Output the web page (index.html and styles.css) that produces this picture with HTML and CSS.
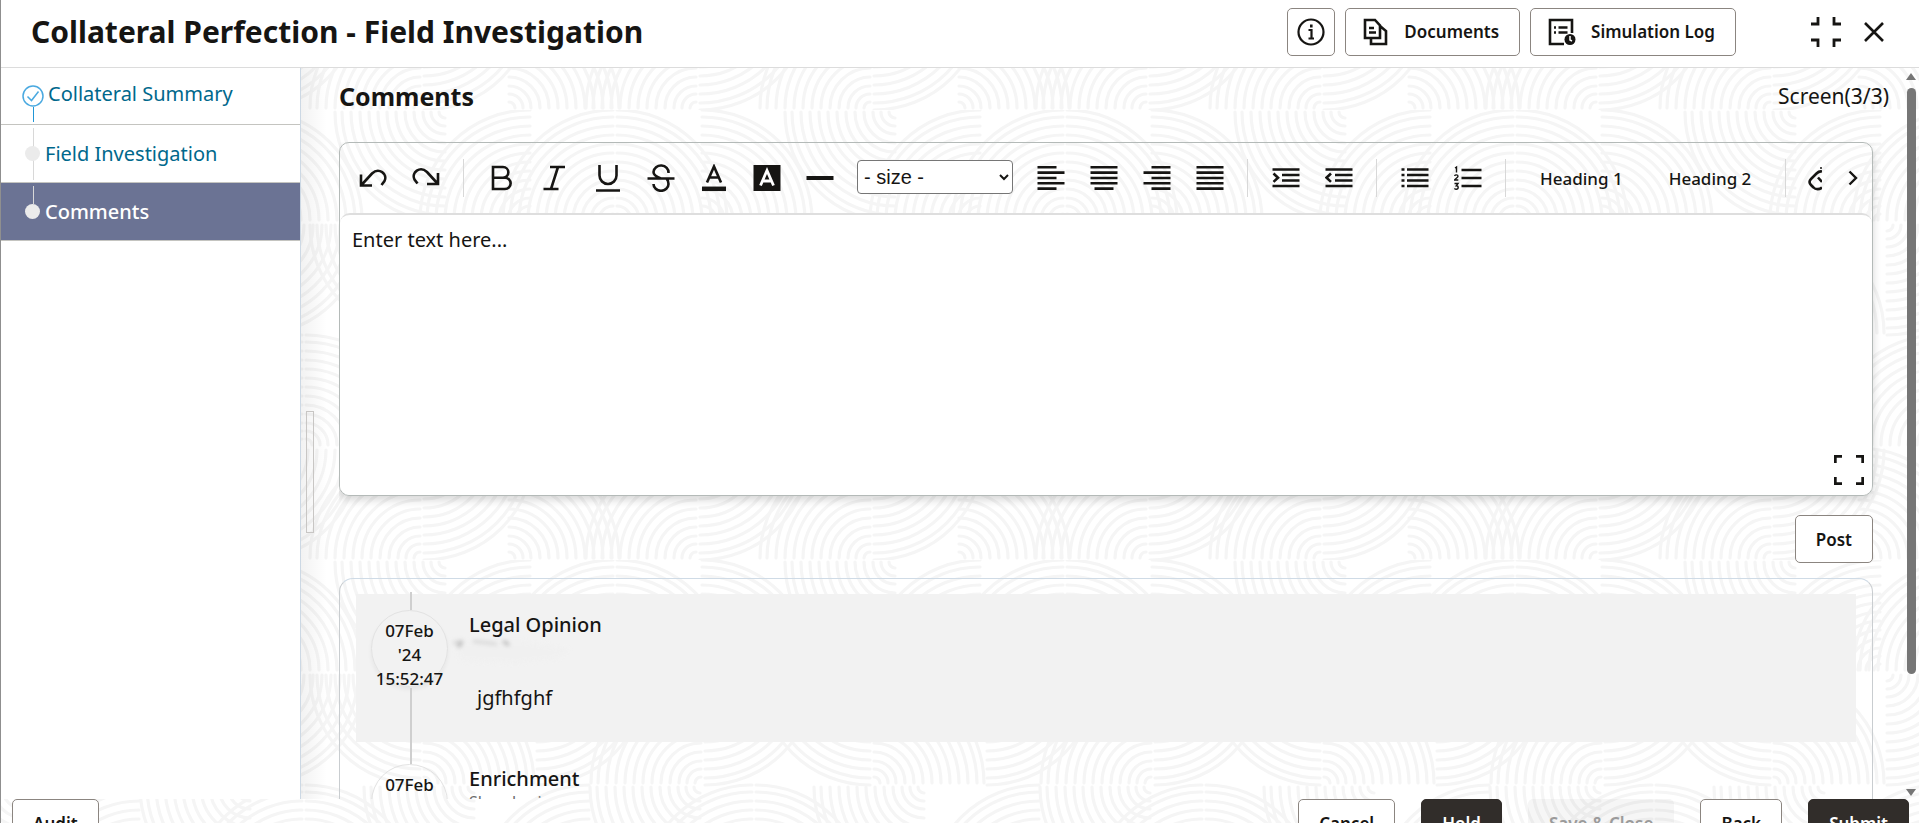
FILE: index.html
```html
<!DOCTYPE html>
<html lang="en">
<head>
<meta charset="utf-8">
<title>Collateral Perfection - Field Investigation</title>
<link rel="stylesheet" href="styles.css">
</head>
<body>
<div class="app">
  <header class="header">
    <h1 class="header-title">Collateral Perfection - Field Investigation</h1>
    <div class="header-actions">
      <button class="btn btn-icon" type="button" aria-label="Information">
        <svg width="28" height="28" viewBox="0 0 28 28" fill="none" stroke="currentColor" stroke-width="2.200"><circle cx="14" cy="14" r="12.500"/><path d="M11.500 12h3v8.500M11.500 20.500h5.500"/><path d="M14.300 6.500v3" stroke-width="2.600"/></svg>
      </button>
      <button class="btn btn-wide" type="button">
        <svg width="26" height="28" viewBox="0 0 26 28" fill="none" stroke="currentColor" stroke-width="2.600"><path d="M2 2h10l5 5.500V20H2zM6 10h5M6 14.500h7M17 8l6 5v13H8v-6"/></svg>
        Documents
      </button>
      <button class="btn btn-wide" type="button">
        <svg width="28" height="28" viewBox="0 0 28 28" fill="none" stroke="currentColor" stroke-width="2.600"><path d="M16 26H2V2h22v13M6 9.500h2M10.500 9.500h9M6 14.500h2M10.500 14.500h9"/><circle cx="22" cy="21.500" r="5.500" fill="currentColor" stroke="none"/><path d="M22 18v4l2 1" stroke="#fff" stroke-width="1.500"/></svg>
        Simulation Log
      </button>
    </div>
    <div class="window-actions">
      <button class="plain" type="button" aria-label="Exit full screen">
        <svg width="30" height="30" viewBox="0 0 30 30" fill="none" stroke="currentColor" stroke-width="2.800"><path d="M7 0v7H0M23 0v7h7M0 23h7v7M30 23h-7v7"/></svg>
      </button>
      <button class="plain" type="button" aria-label="Close">
        <svg width="20" height="20" viewBox="0 0 20 20" fill="none" stroke="currentColor" stroke-width="2.600"><path d="M1 1l18 18M19 1L1 19"/></svg>
      </button>
    </div>
  </header>

  <div class="body">
    <nav class="steps" aria-label="Steps">
      <a class="step step-done" href="#summary">
        <span class="step-mark"><svg width="22" height="22" viewBox="0 0 22 22" fill="none" stroke="#4aa9e0" stroke-width="1.500"><circle cx="11" cy="11" r="10"/><path d="M5.500 11.500l4 4 7-9"/></svg></span>
        Collateral Summary
      </a>
      <a class="step step-middle" href="#field"><span class="step-mark"><i class="dot"></i></span>Field Investigation</a>
      <a class="step step-current" href="#comments" aria-current="step"><span class="step-mark"><i class="dot"></i></span>Comments</a>
    </nav>
    <div class="splitter"><span class="splitter-handle"></span></div>

    <main class="content">
      <div class="content-head">
        <h2 class="content-title">Comments</h2>
        <span class="content-count">Screen(3/3)</span>
      </div>

      <section class="editor">
        <div class="toolbar">
          <button class="tool" type="button" aria-label="Undo"><svg width="28" height="28" viewBox="0 0 28 28"><path d="M2 10.500v11h11M2 21.500L13 9.500C20 3 29 10 25.500 17l-3 4"/></svg></button>
          <button class="tool" type="button" aria-label="Redo"><svg width="28" height="28" viewBox="0 0 28 28"><path d="M26 9v11H15M26 20L15 8C8 1.500-1 8.500 2.500 15.500l3 4"/></svg></button>
          <span class="sep"></span>
          <button class="tool" type="button" aria-label="Bold"><svg width="28" height="28" viewBox="0 0 28 28"><path d="M5 3h10a5.200 5.200 0 0 1 0 10.700H5zM5 13.700h12a5.600 5.600 0 0 1 0 11.300H5z"/></svg></button>
          <button class="tool" type="button" aria-label="Italic"><svg width="28" height="28" viewBox="0 0 28 28"><path d="M9 3h15M2.500 25h15M17 3L10 25"/></svg></button>
          <button class="tool" type="button" aria-label="Underline"><svg width="28" height="28" viewBox="0 0 28 28"><path d="M5.500 1v10.500a8.500 8.500 0 0 0 17 0V1M2 26.500h24"/></svg></button>
          <button class="tool" type="button" aria-label="Strikethrough"><svg width="28" height="28" viewBox="0 0 28 28"><path d="M.500 14.500h27M21.500 9a7.500 7 0 0 0-15-1c0 3 3 5 7.500 6.500M6.500 20a7.500 6.800 0 0 0 15 0c0-2-.5-4-2-5.500"/></svg></button>
          <button class="tool" type="button" aria-label="Text colour"><svg width="28" height="28" viewBox="0 0 28 28"><path d="M7 18.500L14 2.500l7 16M9.500 13.500h9"/><path d="M2 24.800h24" stroke-width="4.500"/></svg></button>
          <button class="tool" type="button" aria-label="Highlight"><svg width="28" height="28" viewBox="0 0 28 28"><path d="M.500 1h27v26H.500z" fill="#161513" stroke="none"/><path d="M7.500 21.500L14 6.500l6.500 15M9.500 17h9" stroke="#fff" stroke-width="2.800"/></svg></button>
          <button class="tool" type="button" aria-label="Rule"><svg width="28" height="28" viewBox="0 0 28 28"><path d="M.500 14h27" stroke-width="4"/></svg></button>
          <select class="size" aria-label="Font size"><option>- size -</option></select>
          <button class="tool" type="button" aria-label="Align left"><svg width="28" height="28" viewBox="0 0 28 28"><path d="M.500 3.200h19M.500 8.600h27M.500 14h19M.500 19.300h27M.500 24.600h19"/></svg></button>
          <button class="tool" type="button" aria-label="Align centre"><svg width="28" height="28" viewBox="0 0 28 28"><path d="M.500 3.200h27M.500 8.600h27M.500 14h27M.500 19.300h27M4.500 24.600h19"/></svg></button>
          <button class="tool" type="button" aria-label="Align right"><svg width="28" height="28" viewBox="0 0 28 28"><path d="M8.500 3.200h19M.500 8.600h27M8.500 14h19M.500 19.300h27M8.500 24.600h19"/></svg></button>
          <button class="tool" type="button" aria-label="Justify"><svg width="28" height="28" viewBox="0 0 28 28"><path d="M.500 3.200h27M.500 8.600h27M.500 14h27M.500 19.300h27M.500 24.600h27"/></svg></button>
          <span class="sep"></span>
          <button class="tool" type="button" aria-label="Indent"><svg width="28" height="28" viewBox="0 0 28 28"><path d="M.500 5.500h27M10 11h17.500M10 16.500h17.500M.500 22h27M1.500 9.500l4.500 4.200-4.500 4.200"/></svg></button>
          <button class="tool" type="button" aria-label="Outdent"><svg width="28" height="28" viewBox="0 0 28 28"><path d="M.500 5.500h27M10 11h17.500M10 16.500h17.500M.500 22h27M6 9.500l-4.500 4.200L6 17.900"/></svg></button>
          <span class="sep"></span>
          <button class="tool" type="button" aria-label="Bulleted list"><svg width="28" height="28" viewBox="0 0 28 28"><path d="M.500 5.500h3M6 5.500h21.500M.500 11h3M6 11h21.500M.500 16.500h3M6 16.500h21.500M.500 22h3M6 22h21.500"/></svg></button>
          <button class="tool" type="button" aria-label="Numbered list"><svg width="28" height="28" viewBox="0 0 28 28"><path d="M7.500 6h20M7.500 14h20M7.500 22h20"/><path class="digits" d="M1 4l1.500-1v5.500M.500 12c.5-1.500 3.500-1.500 3.500.3 0 1.200-2.500 2.200-3.500 3.700H4.300M.500 19.500h3.500L2.300 21.700c2.500 0 2.500 3.500 0 3.500-.9 0-1.500-.3-1.900-.8"/></svg></button>
          <span class="sep"></span>
          <button class="tool-text" type="button">Heading 1</button>
          <button class="tool-text" type="button">Heading 2</button>
          <span class="sep"></span>
          <span class="overflow">
            <button class="plain cut" type="button" aria-label="Link"><svg width="14" height="28" viewBox="0 0 14 28" fill="none" stroke="currentColor" stroke-width="2.600"><path d="M14 7.500c-2.500-.5-4 .5-5.500 2L3 15c-2 2-2 4 0 6l2.500 2.500c2 2.200 6 2.200 8.500 0M10 13.500l4 4.500"/><path d="M13 3v2" stroke-width="1.500"/></svg></button>
            <button class="plain" type="button" aria-label="More tools"><svg width="10" height="16" viewBox="0 0 10 16" fill="none" stroke="currentColor" stroke-width="2.400"><path d="M1.500 1.500L8 8l-6.500 6.500"/></svg></button>
          </span>
        </div>
        <div class="editor-area">
          <textarea class="editor-text" aria-label="Comment" placeholder="Enter text here..."></textarea>
          <button class="plain expand" type="button" aria-label="Full screen"><svg width="30" height="30" viewBox="0 0 30 30" fill="none" stroke="currentColor" stroke-width="2.800"><path d="M1.300 8V1.300H8M22 1.300h6.700V8M1.300 22v6.700H8M22 28.700h6.700V22"/></svg></button>
        </div>
      </section>

      <div class="post-row"><button class="btn btn-post" type="button">Post</button></div>

      <section class="history">
        <article class="entry entry-shaded">
          <div class="entry-time"><time class="stamp">07Feb<br>'24<br>15:52:47</time></div>
          <div class="entry-body"><h3 class="entry-title">Legal Opinion</h3><div class="entry-author"><svg class="smudge" width="140" height="32" viewBox="0 0 140 32"><path d="M4 2h70l46 8-12 10-40 4-56-2z" fill="#f0f0f0"/><path d="M4 4l10-2M24 2l24 3" stroke="#c8c8c8" stroke-width="3"/><path d="M54 2l6 4M9 8l4-5" stroke="#999" stroke-width="3"/></svg></div><p class="entry-text">jgfhfghf</p></div>
        </article>
        <article class="entry">
          <div class="entry-time"><time class="stamp">07Feb<br>'24<br>15:52:47</time></div>
          <div class="entry-body"><h3 class="entry-title">Enrichment</h3><div class="entry-author">Shreehari</div></div>
        </article>
      </section>
    </main>

    <div class="scrollbar" aria-hidden="true"><i class="arrow-up"></i><i class="thumb"></i><i class="arrow-down"></i></div>
  </div>

  <footer class="footer">
    <button class="btn btn-foot" type="button">Audit</button>
    <span class="grow"></span>
    <button class="btn btn-foot" type="button">Cancel</button>
    <button class="btn btn-foot btn-dark" type="button">Hold</button>
    <button class="btn btn-foot btn-off" type="button" disabled>Save &amp; Close</button>
    <button class="btn btn-foot" type="button">Back</button>
    <button class="btn btn-foot btn-dark" type="button">Submit</button>
  </footer>
</div>
</body>
</html>
```
FILE: styles.css
```css
* { box-sizing: border-box; }

body {
  margin: 0;
  font-family: "Noto Sans", "Open Sans", sans-serif;
  font-size: 20px;
  color: #161513;
  overflow: hidden;
}

h1, h2, h3, p { margin: 0; }
button, select, textarea { font: inherit; color: inherit; }
svg { display: block; flex: none; }

.app {
  height: 100vh;
  display: grid;
  grid-template-rows: 68px 1fr 24px;
  border-left: 1px solid #8f8f8f;
  background-color: #fff;
  /* 450px tile of quarter-circle ripples, four rows of quadrants */
  background-image: url("data:image/svg+xml,%3Csvg xmlns='http://www.w3.org/2000/svg' width='450' height='450'%3E%3Cdefs%3E%3Cg id='q' fill='none' stroke='%23f5f5f5' stroke-width='3.2' stroke-linecap='round'%3E%3Cpath d='M8 2A6 6 0 0 1 2 8M16 2A14 14 0 0 1 2 16M24 2A22 22 0 0 1 2 24M33 2A31 31 0 0 1 2 33M42 2A40 40 0 0 1 2 42M51 2A49 49 0 0 1 2 51M60 2A58 58 0 0 1 2 60M69 2A67 67 0 0 1 2 69M78 2A76 76 0 0 1 2 78M87 2A85 85 0 0 1 2 87M96 2A94 94 0 0 1 2 96M105 2A103 103 0 0 1 2 105M112 2A110 110 0 0 1 2 112'/%3E%3C/g%3E%3Cg id='t'%3E%3Cuse href='%23q' transform='translate(147 0) scale(-1 1)'/%3E%3Cuse href='%23q' transform='translate(232 112) scale(-1)'/%3E%3Cuse href='%23q' transform='translate(315 112) scale(-1)'/%3E%3Cuse href='%23q' transform='translate(315 112) scale(1 -1)'/%3E%3Cuse href='%23q' transform='translate(400 112) scale(1 -1)'/%3E%3Cuse href='%23q' transform='translate(122 225) scale(1 -1)'/%3E%3Cuse href='%23q' transform='translate(122 113) scale(-1 1)'/%3E%3Cuse href='%23q' transform='translate(235 113)'/%3E%3Cuse href='%23q' transform='translate(403 225) scale(-1)'/%3E%3Cuse href='%23q' transform='translate(403 113)'/%3E%3Cuse href='%23q' transform='translate(176 225) scale(-1 1)'/%3E%3Cuse href='%23q' transform='translate(291 337) scale(-1)'/%3E%3Cuse href='%23q' transform='translate(402 225) scale(-1 1)'/%3E%3Cuse href='%23q' transform='translate(454 337) scale(-1)'/%3E%3Cuse href='%23q' transform='translate(454 337) scale(1 -1)'/%3E%3Cuse href='%23q' transform='translate(122 450) scale(-1)'/%3E%3Cuse href='%23q' transform='translate(122 338)'/%3E%3Cuse href='%23q' transform='translate(207 450) scale(1 -1)'/%3E%3Cuse href='%23q' transform='translate(398 450) scale(-1)'/%3E%3Cuse href='%23q' transform='translate(398 338)'/%3E%3C/g%3E%3C/defs%3E%3Cuse href='%23t'/%3E%3Cuse href='%23t' x='-450'/%3E%3C/svg%3E");
  background-position: 299px 110px;
}

/* Buttons */
.btn {
  display: inline-flex;
  align-items: center;
  justify-content: center;
  height: 48px;
  padding: 0 20px;
  border: 1px solid #8b8580;
  border-radius: 5px;
  background: #fff;
  font-size: 17px;
  font-weight: 600;
  white-space: nowrap;
}
.btn-icon { width: 48px; padding: 0; }
.btn-wide { gap: 15px; padding: 0 20px 0 17px; }
.plain { display: flex; padding: 0; border: 0; background: none; }

/* Header */
.header {
  display: flex;
  align-items: center;
  padding: 0 35px 4px 30px;
  background: #fff;
  border-bottom: 1px solid #dcdcdc;
}
.header-title { flex: 1; font-size: 30px; font-weight: 700; white-space: nowrap; }
.header-actions { display: flex; gap: 10px; }
.window-actions { display: flex; align-items: center; gap: 23px; margin-left: 75px; }

/* Body */
.body {
  display: grid;
  grid-template-columns: 300px 38px 1fr 14px;
  min-height: 0;
  overflow: hidden;
}
.steps { background: #fff; border-right: 1px solid #ccd8e4; }
.step {
  position: relative;
  display: flex;
  align-items: center;
  height: 58px;
  padding-left: 23px;
  gap: 4px;
  border-bottom: 1px solid #c4c4c0;
  color: #00688c;
  font-size: 20px;
  text-decoration: none;
}
.step-done { height: 57px; padding-left: 21px; padding-bottom: 6px; }
.step-done .step-mark { padding-top: 6px; }
.step-current { background: #6b7394; color: #fff; font-weight: 500; }
.step-mark { display: flex; justify-content: center; min-width: 17px; }
.dot { width: 15px; height: 15px; border-radius: 50%; background: #ebebeb; z-index: 1; }
.step::after {
  content: "";
  position: absolute;
  left: 32px;
  top: 3px;
  bottom: 2px;
  border-left: 1px solid #d8d8d8;
}
.step-done::after { top: 39px; border-color: #2196d6; }
.step-current::after { bottom: 36px; }

.splitter {
  display: flex;
  align-items: center;
  padding: 76px 0 0 5px;
  background: linear-gradient(90deg, rgba(0, 0, 0, .05), rgba(0, 0, 0, 0) 26px);
}
.splitter-handle { width: 8px; height: 122px; border: 1px solid #c8c6c4; }

/* Content */
.content { padding: 0 32px 0 0; overflow: hidden; }
.content-head {
  display: flex;
  justify-content: space-between;
  align-items: center;
  height: 74px;
  padding-bottom: 18px;
  margin-right: -16px;
}
.content-title { font-size: 25px; font-weight: 700; }
.content-count { font-size: 21px; }

.editor {
  border: 1px solid #b4bab8;
  border-radius: 10px;
  box-shadow: 0 4px 8px rgba(0, 0, 0, .16);
  clip-path: inset(0 -12px -16px -12px);
}
.toolbar { display: flex; align-items: center; height: 70px; padding-left: 6px; }
.tool {
  display: flex;
  justify-content: center;
  width: 53px;
  padding: 0;
  border: 0;
  background: none;
}
.tool svg { fill: none; stroke: currentColor; stroke-width: 2.6; }
.tool .digits { stroke-width: 1.4; }
.sep { height: 38px; margin: 0 11px; border-left: 1px solid #d8d8d8; }
.size {
  width: 156px;
  height: 34px;
  margin: 0 11px 3px;
  padding-left: 2px;
  border: 1px solid #767676;
  border-radius: 4px;
  background: #fff;
  font-family: "Liberation Sans", Arial, sans-serif;
  font-size: 20px;
}
.tool-text { padding: 0 23px; border: 0; background: none; font-size: 17px; font-weight: 500; white-space: nowrap; }
.overflow { display: flex; align-items: center; flex: 1; justify-content: space-between; padding: 0 14px 0 11px; }
.cut { width: 14px; overflow: hidden; }

.editor-area { position: relative; background: #fff; border-top: 2px solid #dedede; border-radius: 10px; }
.editor-text {
  display: block;
  width: 100%;
  height: 280px;
  padding: 11px 12px;
  border: 0;
  background: none;
  resize: none;
  font-size: 20px;
}
.editor-text::placeholder { color: #161513; opacity: 1; }
.expand { position: absolute; right: 8px; bottom: 10px; }

.post-row { display: flex; justify-content: flex-end; padding: 19px 0 15px; }

/* History */
.history {
  padding: 15px 16px;
  border: 1px solid #c9cdd0;
  border-top-color: #cfdbe6;
  border-radius: 14px;
}
.entry { display: flex; height: 148px; margin-bottom: 6px; }
.entry-shaded { background: #f2f2f2; }
.entry-time { position: relative; display: flex; justify-content: center; align-items: flex-start; width: 113px; padding-top: 16px; padding-right: 6px; }
.entry-time::before,
.entry-time::after { content: ""; position: absolute; left: 54px; border-left: 2px solid #cfcfcf; }
.entry-time::before { top: -2px; height: 18px; }
.entry-time::after { top: 94px; bottom: -22px; }
.entry + .entry .entry-time::before { display: none; }
.stamp {
  width: 77px;
  height: 77px;
  padding-top: 8px;
  border: 1px solid #e2e2e2;
  border-radius: 50%;
  box-shadow: 0 3px 4px rgba(0, 0, 0, .05);
  font-size: 17px;
  font-weight: 500;
  line-height: 24px;
  text-align: center;
}
.entry-body { flex: 1; padding-top: 17px; }
.entry-title { font-size: 20px; font-weight: 500; line-height: 28px; }
.entry-author { height: 33px; font-size: 16px; line-height: 18px; color: #6b6b6b; }
.entry-text { padding: 12px 8px; font-size: 20px; line-height: 28px; }
.smudge { margin-left: -20px; filter: blur(2px); opacity: .7; }

/* Scrollbar */
.scrollbar { display: flex; flex-direction: column; align-items: center; padding: 5px 2px 3px 0; }
.arrow-up { border: 5px solid transparent; border-top: 0; border-bottom: 7px solid #767676; }
.arrow-down { margin-top: auto; border: 5px solid transparent; border-bottom: 0; border-top: 7px solid #767676; }
.thumb { width: 9px; height: 81%; margin-top: 8px; border-radius: 5px; background: #767676; }

/* Footer */
.footer { display: flex; align-items: flex-start; gap: 26px; padding: 0 10px 0 11px; overflow: hidden; }
.btn-foot { flex: none; }
.btn-dark { background: #312d2a; border-color: #312d2a; color: #fff; }
.btn-off { background: rgba(22, 21, 19, .04); border-color: transparent; color: #9b9b9b; }
.grow { flex: 1; }
```
